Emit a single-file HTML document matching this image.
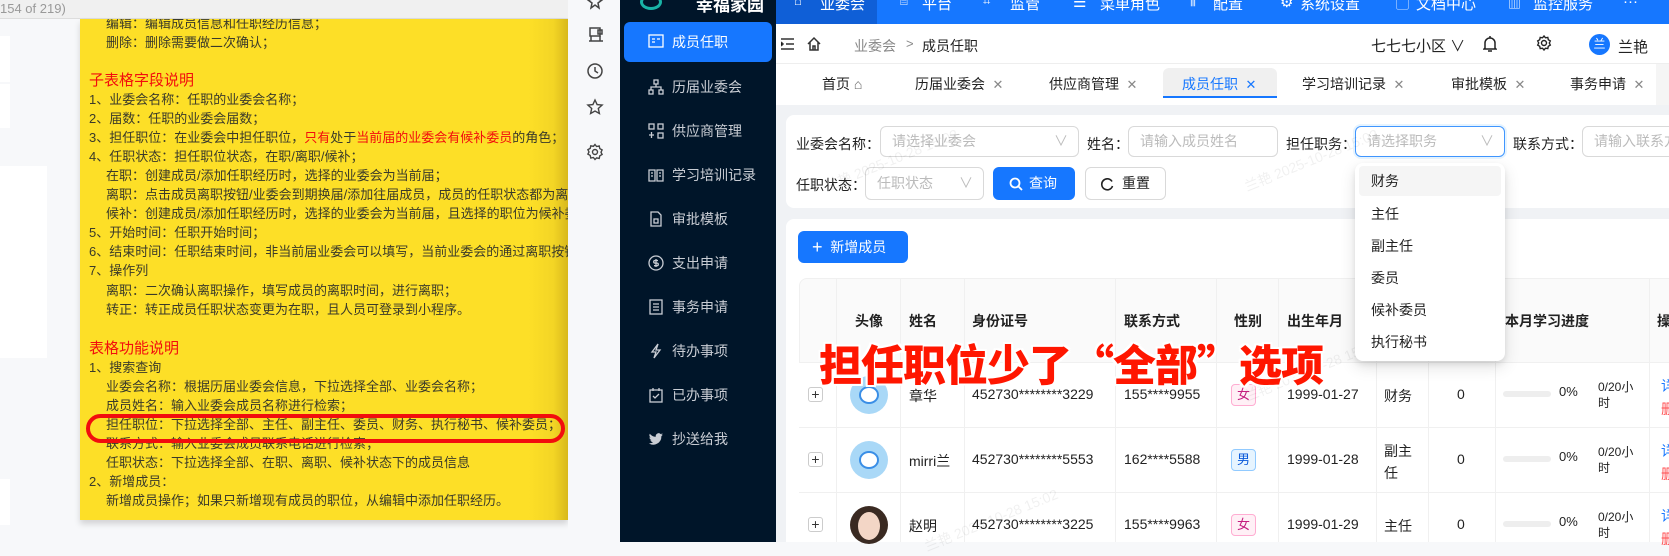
<!DOCTYPE html>
<html><head><meta charset="utf-8">
<style>
*{margin:0;padding:0;box-sizing:border-box}
body{width:1669px;height:542px;overflow:hidden;position:relative;background:#f7f8fa;font-family:"Liberation Sans","Noto Sans CJK SC",sans-serif;color:#333}
.a{position:absolute;white-space:nowrap}
.doc{position:absolute;left:80px;top:19px;width:488px;height:501px;background:linear-gradient(90deg,#fddf27 0,#fddf27 92%,#f3d525 97%,#d8b81c 100%);box-shadow:0 4px 6px rgba(0,0,0,.15);overflow:hidden}
.doc .l{position:absolute;left:9px;font-size:13px;line-height:19px;color:#3a3a2a;white-space:nowrap}
.doc .i{left:26px}
.doc .h{font-size:15px;color:#f20d0d}
.r{color:#f20d0d}
.side{position:absolute;left:620px;top:0;width:156px;height:542px;background:#001529}
.si{position:absolute;left:4px;width:148px;height:40px;color:#c9cdd4;font-size:14px;line-height:40px;padding-left:48px}
.si svg{position:absolute;left:24px;top:12px}
.nav{position:absolute;left:776px;top:0;width:893px;height:24px;background:#1677ff;color:#fff;font-size:15px;overflow:hidden}
.nav span{position:absolute;top:-7px}
.tab{position:absolute;top:74px;font-size:14px;color:#222}
.x{color:#888;font-size:13px}
.lbl{position:absolute;font-size:14px;color:#222}
.inp{position:absolute;border:1px solid #d9d9d9;border-radius:6px;background:#fff;font-size:14px;color:#bbb;padding-left:11px;white-space:nowrap;overflow:hidden}
.dd{position:absolute;left:1355px;top:163px;width:150px;height:198px;background:#fff;border-radius:8px;box-shadow:0 6px 16px rgba(0,0,0,.12),0 3px 6px rgba(0,0,0,.08)}
.dd div{position:absolute;left:4px;width:142px;height:30px;line-height:30px;padding-left:12px;font-size:14px;color:#222;border-radius:4px}
.th{position:absolute;top:311px;font-size:14px;font-weight:bold;color:#222}
.td{position:absolute;font-size:14px;color:#222}
.vl{position:absolute;top:278px;width:1px;height:264px;background:#f0f0f0}
.hl{position:absolute;left:799px;width:870px;height:1px;background:#f0f0f0}
.plus{position:absolute;left:808px;width:15px;height:15px;border:1px solid #ccc;border-radius:3px;font-size:14px;line-height:12px;text-align:center;color:#333;background:#fff}
.av{position:absolute;left:850px;width:38px;height:38px;border-radius:50%;background:#a9d8f7;overflow:hidden}
.tag{position:absolute;left:1231px;width:25px;height:22px;border-radius:4px;font-size:13px;line-height:20px;text-align:center}
.f{background:#fff0f6;border:1px solid #ffadd2;color:#c41d7f}
.m{background:#e6f4ff;border:1px solid #91caff;color:#0958d9}
.bar{position:absolute;left:1503px;width:48px;height:6px;border-radius:3px;background:#eee}
.wm{position:absolute;color:rgba(0,0,0,.06);font-size:14px;transform:rotate(-22deg);white-space:nowrap}
.q{font-family:"Noto Sans CJK SC",sans-serif}
</style></head><body>
<div class="a" style="left:0;top:0;width:568px;height:19px;background:#f0f0f0;border-bottom:1px solid #ddd"></div>
<div class="a" style="left:0;top:1px;font-size:13px;color:#999">154 of 219)</div>
<div class="a" style="left:0;top:36px;width:10px;height:46px;background:#fff"></div>
<div class="a" style="left:0;top:84px;width:10px;height:44px;background:#fff"></div>
<div class="a" style="left:0;top:166px;width:47px;height:192px;background:#fff"></div>
<div class="a" style="left:0;top:479px;width:10px;height:46px;background:#fff"></div>

<div class="doc">
<div class="l i" style="top:-5px">编辑：编辑成员信息和任职经历信息；</div>
<div class="l i" style="top:14px">删除：删除需要做二次确认；</div>
<div class="l h" style="top:52px">子表格字段说明</div>
<div class="l" style="top:71px">1、业委会名称：任职的业委会名称；</div>
<div class="l" style="top:90px">2、届数：任职的业委会届数；</div>
<div class="l" style="top:109px">3、担任职位：在业委会中担任职位，<span class="r">只有</span>处于<span class="r">当前届的业委会有候补委员</span>的角色；</div>
<div class="l" style="top:128px">4、任职状态：担任职位状态，在职/离职/候补；</div>
<div class="l i" style="top:147px">在职：创建成员/添加任职经历时，选择的业委会为当前届；</div>
<div class="l i" style="top:166px">离职：点击成员离职按钮/业委会到期换届/添加往届成员，成员的任职状态都为离职；</div>
<div class="l i" style="top:185px">候补：创建成员/添加任职经历时，选择的业委会为当前届，且选择的职位为候补委员；</div>
<div class="l" style="top:204px">5、开始时间：任职开始时间；</div>
<div class="l" style="top:223px">6、结束时间：任职结束时间，非当前届业委会可以填写，当前业委会的通过离职按钮操作；</div>
<div class="l" style="top:242px">7、操作列</div>
<div class="l i" style="top:262px">离职：二次确认离职操作，填写成员的离职时间，进行离职；</div>
<div class="l i" style="top:281px">转正：转正成员任职状态变更为在职，且人员可登录到小程序。</div>
<div class="l h" style="top:320px">表格功能说明</div>
<div class="l" style="top:339px">1、搜索查询</div>
<div class="l i" style="top:358px">业委会名称：根据历届业委会信息，下拉选择全部、业委会名称；</div>
<div class="l i" style="top:377px">成员姓名：输入业委会成员名称进行检索；</div>
<div class="l i" style="top:396px">担任职位：下拉选择全部、主任、副主任、委员、财务、执行秘书、候补委员；</div>
<div class="l i" style="top:415px">联系方式：输入业委会成员联系电话进行检索；</div>
<div class="l i" style="top:434px">任职状态：下拉选择全部、在职、离职、候补状态下的成员信息</div>
<div class="l" style="top:453px">2、新增成员：</div>
<div class="l i" style="top:472px">新增成员操作；如果只新增现有成员的职位，从编辑中添加任职经历。</div>
</div>
<div class="a" style="left:86px;top:414px;width:479px;height:29px;border:4px solid #f20d0d;border-radius:15px"></div>

<div class="a" style="left:568px;top:0;width:52px;height:542px;background:#f7f8fa"></div>
<svg class="a" style="left:586px;top:-8px" width="18" height="18" viewBox="0 0 18 18" fill="none" stroke="#444" stroke-width="1.5"><path d="M9 2l2 5 5 1-4 3 1 5-4-3-4 3 1-5-4-3 5-1z"/></svg>
<svg class="a" style="left:587px;top:26px" width="18" height="18" viewBox="0 0 18 18" fill="none" stroke="#444" stroke-width="1.5"><rect x="3" y="2" width="10" height="8"/><rect x="11" y="4" width="4" height="4"/><path d="M2 15h14M4 10v5M13 10v5"/></svg>
<svg class="a" style="left:586px;top:62px" width="18" height="18" viewBox="0 0 18 18" fill="none" stroke="#444" stroke-width="1.5"><circle cx="9" cy="9" r="7"/><path d="M9 5v4l3 2"/></svg>
<svg class="a" style="left:586px;top:98px" width="18" height="18" viewBox="0 0 18 18" fill="none" stroke="#444" stroke-width="1.4"><path d="M9 2l2.1 4.6 5 .5-3.8 3.4 1.1 5L9 13 4.6 15.5l1.1-5L1.9 7.1l5-.5z"/></svg>
<svg class="a" style="left:586px;top:143px" width="18" height="18" viewBox="0 0 18 18" fill="none" stroke="#444" stroke-width="1.4"><circle cx="9" cy="9" r="2.5"/><path d="M9 1.5l1.6 2 2.6-.5.6 2.6 2.3 1.3-1.1 2.3 1.1 2.3-2.3 1.3-.6 2.6-2.6-.5L9 16.5l-1.6-2-2.6.5-.6-2.6-2.3-1.3L3 9 1.9 6.7l2.3-1.3.6-2.6 2.6.5z"/></svg>

<div class="side">
<div class="a" style="left:20px;top:-6px;width:22px;height:16px;border-radius:50%;border:3px solid #19b3a6;border-top-color:#f5a623"></div>
<div class="a" style="left:76px;top:-9px;color:#fff;font-size:17px;font-weight:bold">幸福家园</div>
<div class="si" style="top:22px;background:#1677ff;color:#fff;border-radius:6px"><svg width="16" height="14" viewBox="0 0 16 14" fill="none" stroke="#fff" stroke-width="1.3"><rect x="1" y="1" width="14" height="12"/><path d="M4 5h3M4 8h3M9 5h3"/></svg>成员任职</div>
<div class="si" style="top:67px"><svg width="16" height="16" viewBox="0 0 16 16" fill="none" stroke="#c9cdd4" stroke-width="1.3"><rect x="6" y="1" width="4" height="4"/><rect x="1" y="11" width="4" height="4"/><rect x="11" y="11" width="4" height="4"/><path d="M8 5v3M3 11V8h10v3"/></svg>历届业委会</div>
<div class="si" style="top:111px"><svg width="16" height="16" viewBox="0 0 16 16" fill="none" stroke="#c9cdd4" stroke-width="1.3"><rect x="1" y="1" width="5" height="5"/><rect x="10" y="1" width="5" height="5"/><rect x="10" y="10" width="5" height="5"/><path d="M3.5 9v6M1 12h5"/></svg>供应商管理</div>
<div class="si" style="top:155px"><svg width="16" height="16" viewBox="0 0 16 16" fill="none" stroke="#c9cdd4" stroke-width="1.3"><path d="M1 3h6v11H1zM9 3h6v11H9zM3 6h2M11 6h2M3 9h2M11 9h2"/></svg>学习培训记录</div>
<div class="si" style="top:199px"><svg width="16" height="16" viewBox="0 0 16 16" fill="none" stroke="#c9cdd4" stroke-width="1.3"><path d="M3 1h7l3 3v11H3z"/><rect x="6" y="8" width="4" height="4"/></svg>审批模板</div>
<div class="si" style="top:243px"><svg width="16" height="16" viewBox="0 0 16 16" fill="none" stroke="#c9cdd4" stroke-width="1.3"><circle cx="8" cy="8" r="7"/><path d="M10 5.5H7a1.3 1.3 0 0 0 0 2.6h2a1.3 1.3 0 0 1 0 2.6H6M8 4v8"/></svg>支出申请</div>
<div class="si" style="top:287px"><svg width="16" height="16" viewBox="0 0 16 16" fill="none" stroke="#c9cdd4" stroke-width="1.3"><rect x="2" y="1" width="12" height="14"/><path d="M5 5h6M5 8h6M5 11h6"/></svg>事务申请</div>
<div class="si" style="top:331px"><svg width="16" height="16" viewBox="0 0 16 16" fill="none" stroke="#c9cdd4" stroke-width="1.3"><path d="M10 1L4 9h4l-2 6 6-8H8z"/></svg>待办事项</div>
<div class="si" style="top:375px"><svg width="16" height="16" viewBox="0 0 16 16" fill="none" stroke="#c9cdd4" stroke-width="1.3"><rect x="2" y="3" width="12" height="12"/><path d="M5 1v3M11 1v3M5 9l2 2 4-4"/></svg>已办事项</div>
<div class="si" style="top:419px"><svg width="16" height="16" viewBox="0 0 16 16" fill="#c9cdd4"><path d="M15 3.5c-.5.3-1.1.4-1.7.5.6-.4 1-.9 1.3-1.6-.6.3-1.2.6-1.900.7A2.9 2.9 0 0 0 7.8 5.8 8.3 8.3 0 0 1 1.8 2.7a2.9 2.9 0 0 0 .9 3.9c-.5 0-.9-.2-1.3-.4 0 1.4 1 2.6 2.3 2.9-.4.1-.9.1-1.3 0 .4 1.2 1.4 2 2.7 2A5.8 5.8 0 0 1 .8 12.4 8.2 8.2 0 0 0 13.4 5.500v-.4c.6-.4 1.1-.9 1.6-1.6z"/></svg>抄送给我</div>
</div>

<div class="nav">
<div class="a" style="left:0;top:0;width:101px;height:24px;background:#0f5fd7"></div>
<span style="left:44px">业委会</span><span style="left:18px;font-size:13px">⌂</span>
<span style="left:124px;font-size:13px">⌸</span><span style="left:146px">平台</span>
<span style="left:207px;font-size:13px">⌗</span><span style="left:234px">监管</span>
<span style="left:297px">☰</span><span style="left:324px">菜单角色</span>
<span style="left:414px;font-size:13px">⫼</span><span style="left:437px">配置</span>
<span style="left:504px">⚙</span><span style="left:524px">系统设置</span>
<span style="left:620px;font-size:13px">▢</span><span style="left:640px">文档中心</span>
<span style="left:732px;font-size:13px">▥</span><span style="left:757px">监控服务</span>
<span style="left:847px">···</span>
</div>

<div class="a" style="left:776px;top:24px;width:893px;height:40px;background:#fff;border-bottom:1px solid #eee"></div>
<svg class="a" style="left:781px;top:38px" width="13" height="12" viewBox="0 0 13 12" stroke="#333" stroke-width="1.5"><path d="M0 1h13M5 6h8M0 11h13M0 4l2 2-2 2"/></svg>
<svg class="a" style="left:806px;top:36px" width="16" height="16" viewBox="0 0 16 16" fill="none" stroke="#333" stroke-width="1.5"><path d="M2 8l6-6 6 6M4 6v8h8V6M7 14v-4h2v4"/></svg>
<div class="a" style="left:854px;top:36px;font-size:14px;color:#888">业委会</div>
<div class="a" style="left:906px;top:36px;font-size:13px;color:#888">&gt;</div>
<div class="a" style="left:922px;top:36px;font-size:14px;color:#222">成员任职</div>
<div class="a" style="left:1371px;top:35px;font-size:15px;color:#222">七七七小区 ∨</div>
<svg class="a" style="left:1483px;top:35px" width="14" height="18" viewBox="0 0 14 18" fill="none" stroke="#222" stroke-width="1.5"><path d="M2 13V8a5 5 0 0 1 10 0v5l1 1H1zM5 16h4M7 1v2"/></svg>
<svg class="a" style="left:1536px;top:35px" width="16" height="16" viewBox="0 0 16 16" fill="none" stroke="#222" stroke-width="1.4"><circle cx="8" cy="8" r="2.5"/><path d="M8 1l1.5 1.8 2.3-.4.5 2.3 2 1.2-1 2.1 1 2.1-2 1.2-.5 2.3-2.3-.4L8 15l-1.5-1.8-2.3.4-.5-2.3-2-1.2 1-2.1-1-2.1 2-1.2.5-2.3 2.3.4z"/></svg>
<div class="a" style="left:1589px;top:34px;width:21px;height:21px;border-radius:50%;background:#1677ff;color:#fff;font-size:12px;line-height:21px;text-align:center">兰</div>
<div class="a" style="left:1618px;top:36px;font-size:15px;color:#222">兰艳</div>

<div class="a" style="left:776px;top:64px;width:893px;height:41px;background:#fff"></div>
<div class="tab" style="left:822px">首页 <span style="color:#666">⌂</span></div>
<div class="tab" style="left:915px">历届业委会 <span class="x">&nbsp;✕</span></div>
<div class="tab" style="left:1049px">供应商管理 <span class="x">&nbsp;✕</span></div>
<div class="a" style="left:1163px;top:68px;width:114px;height:30px;background:#f0f0f0;border-radius:6px 6px 0 0;border-bottom:2px solid #1677ff"></div>
<div class="tab" style="left:1182px;color:#1677ff">成员任职 <span style="font-size:13px">&nbsp;✕</span></div>
<div class="tab" style="left:1302px">学习培训记录 <span class="x">&nbsp;✕</span></div>
<div class="tab" style="left:1451px">审批模板 <span class="x">&nbsp;✕</span></div>
<div class="tab" style="left:1570px">事务申请 <span class="x">&nbsp;✕</span></div>
<div class="a" style="left:1656px;top:64px;width:13px;height:41px;background:#f5f5f5"></div>

<div class="a" style="left:776px;top:105px;width:893px;height:437px;background:#f0f2f5"></div>
<div class="a" style="left:786px;top:115px;width:883px;height:93px;background:#fff;border-radius:8px 0 0 8px"></div>
<div class="a" style="left:786px;top:219px;width:883px;height:323px;background:#fff;border-radius:8px 0 0 0"></div>

<div class="lbl" style="left:796px;top:134px">业委会名称：</div>
<div class="inp" style="left:880px;top:126px;width:199px;height:31px;line-height:29px">请选择业委会<span style="position:absolute;right:10px;color:#bbb">∨</span></div>
<div class="lbl" style="left:1087px;top:134px">姓名：</div>
<div class="inp" style="left:1128px;top:126px;width:150px;height:31px;line-height:29px">请输入成员姓名</div>
<div class="lbl" style="left:1286px;top:134px">担任职务：</div>
<div class="inp" style="left:1355px;top:126px;width:150px;height:31px;line-height:29px;border-color:#4096ff;box-shadow:0 0 0 2px rgba(5,145,255,.1)">请选择职务<span style="position:absolute;right:10px;color:#bbb">∨</span></div>
<div class="lbl" style="left:1513px;top:134px">联系方式：</div>
<div class="inp" style="left:1582px;top:126px;width:100px;height:31px;line-height:29px">请输入联系方式</div>
<div class="lbl" style="left:796px;top:175px">任职状态：</div>
<div class="inp" style="left:865px;top:167px;width:119px;height:33px;line-height:31px">任职状态<span style="position:absolute;right:10px;color:#bbb">∨</span></div>
<div class="a" style="left:993px;top:167px;width:82px;height:33px;background:#1677ff;border-radius:6px;color:#fff;font-size:14px;line-height:33px;padding-left:16px">
<svg style="position:absolute;left:16px;top:10px" width="14" height="14" viewBox="0 0 14 14" fill="none" stroke="#fff" stroke-width="1.8"><circle cx="6" cy="6" r="4.5"/><path d="M9.5 9.5L13 13"/></svg><span style="margin-left:20px">查询</span></div>
<div class="a" style="left:1085px;top:167px;width:81px;height:33px;border:1px solid #d9d9d9;border-radius:6px;background:#fff;font-size:14px;line-height:31px;padding-left:14px;color:#222"><svg style="position:absolute;left:14px;top:9px" width="14" height="14" viewBox="0 0 14 14" fill="none" stroke="#222" stroke-width="1.6"><path d="M12 4.5A5.5 5.5 0 1 0 12.5 9"/></svg><span style="margin-left:22px">重置</span></div>

<div class="a" style="left:798px;top:231px;width:110px;height:32px;background:#1677ff;border-radius:6px;color:#fff;font-size:14px;line-height:32px;padding-left:14px"><span style="font-size:18px;vertical-align:-1px">+</span>&nbsp; 新增成员</div>

<div class="a" style="left:799px;top:278px;width:870px;height:84px;background:#fafafa;border-radius:8px 0 0 0;border-top:1px solid #f0f0f0;border-left:1px solid #f0f0f0"></div>
<div class="vl" style="left:836px"></div><div class="vl" style="left:900px"></div><div class="vl" style="left:964px"></div><div class="vl" style="left:1115px"></div><div class="vl" style="left:1216px"></div><div class="vl" style="left:1278px"></div><div class="vl" style="left:1376px"></div><div class="vl" style="left:1428px"></div><div class="vl" style="left:1495px"></div><div class="vl" style="left:1649px"></div>
<div class="hl" style="top:362px"></div><div class="hl" style="top:427px"></div><div class="hl" style="top:492px"></div>
<div class="th" style="left:855px">头像</div><div class="th" style="left:909px">姓名</div><div class="th" style="left:972px">身份证号</div><div class="th" style="left:1124px">联系方式</div><div class="th" style="left:1234px">性别</div><div class="th" style="left:1287px">出生年月</div><div class="th" style="left:1505px">本月学习进度</div><div class="th" style="left:1657px">操</div>

<div class="plus" style="top:387px">+</div>
<div class="av" style="top:376px"><div style="position:absolute;left:9px;top:10px;width:20px;height:18px;border-radius:50%;background:#fff;border:2px solid #3a8ee6"></div></div>
<div class="td" style="left:909px;top:386px">章华</div><div class="td" style="left:972px;top:386px">452730********3229</div><div class="td" style="left:1124px;top:386px">155****9955</div>
<div class="tag f" style="top:384px">女</div><div class="td" style="left:1287px;top:386px">1999-01-27</div><div class="td" style="left:1384px;top:386px">财务</div><div class="td" style="left:1457px;top:386px">0</div>
<div class="bar" style="top:391px"></div><div class="td" style="left:1559px;top:384px;font-size:13px">0%</div><div class="td" style="left:1598px;top:379px;font-size:12px;line-height:16px">0/20小<br>时</div>
<div class="td" style="left:1661px;top:376px;color:#1677ff">详</div><div class="td" style="left:1661px;top:399px;color:#ff4d4f">删</div>

<div class="plus" style="top:452px">+</div>
<div class="av" style="top:441px"><div style="position:absolute;left:9px;top:10px;width:20px;height:18px;border-radius:50%;background:#fff;border:2px solid #3a8ee6"></div></div>
<div class="td" style="left:909px;top:451px">mirri兰</div><div class="td" style="left:972px;top:451px">452730********5553</div><div class="td" style="left:1124px;top:451px">162****5588</div>
<div class="tag m" style="top:449px">男</div><div class="td" style="left:1287px;top:451px">1999-01-28</div><div class="td" style="left:1384px;top:440px;line-height:22px">副主<br>任</div><div class="td" style="left:1457px;top:451px">0</div>
<div class="bar" style="top:456px"></div><div class="td" style="left:1559px;top:449px;font-size:13px">0%</div><div class="td" style="left:1598px;top:444px;font-size:12px;line-height:16px">0/20小<br>时</div>
<div class="td" style="left:1661px;top:441px;color:#1677ff">详</div><div class="td" style="left:1661px;top:464px;color:#ff4d4f">删</div>

<div class="plus" style="top:517px">+</div>
<div class="av" style="top:506px;background:#3a2a22"><div style="position:absolute;left:8px;top:6px;width:22px;height:28px;border-radius:50%;background:#f3d6c6"></div></div>
<div class="td" style="left:909px;top:516px">赵明</div><div class="td" style="left:972px;top:516px">452730********3225</div><div class="td" style="left:1124px;top:516px">155****9963</div>
<div class="tag f" style="top:514px">女</div><div class="td" style="left:1287px;top:516px">1999-01-29</div><div class="td" style="left:1384px;top:516px">主任</div><div class="td" style="left:1457px;top:516px">0</div>
<div class="bar" style="top:521px"></div><div class="td" style="left:1559px;top:514px;font-size:13px">0%</div><div class="td" style="left:1598px;top:509px;font-size:12px;line-height:16px">0/20小<br>时</div>
<div class="td" style="left:1661px;top:506px;color:#1677ff">详</div><div class="td" style="left:1661px;top:529px;color:#ff4d4f">删</div>

<div class="wm" style="left:820px;top:150px">兰艳 2025-10-28 15:02</div>
<div class="wm" style="left:1240px;top:150px">兰艳 2025-10-28 15:02</div>
<div class="wm" style="left:1240px;top:360px">兰艳 2025-10-28 15:02</div>
<div class="wm" style="left:920px;top:510px">兰艳 2025-10-28 15:02</div>

<div class="dd">
<div style="top:3px;background:#f5f5f5">财务</div>
<div style="top:36px">主任</div>
<div style="top:68px">副主任</div>
<div style="top:100px">委员</div>
<div style="top:132px">候补委员</div>
<div style="top:164px">执行秘书</div>
</div>

<div class="a" style="left:819px;top:332px;font-size:43px;font-weight:900;color:#ff1600;letter-spacing:-1px;text-shadow:2px 0 #fff,-2px 0 #fff,0 2px #fff,0 -2px #fff,2px 2px #fff,-2px -2px #fff,2px -2px #fff,-2px 2px #fff">担任职位少了<span class="q">“</span>全部<span class="q">”</span>选项</div>
</body></html>
